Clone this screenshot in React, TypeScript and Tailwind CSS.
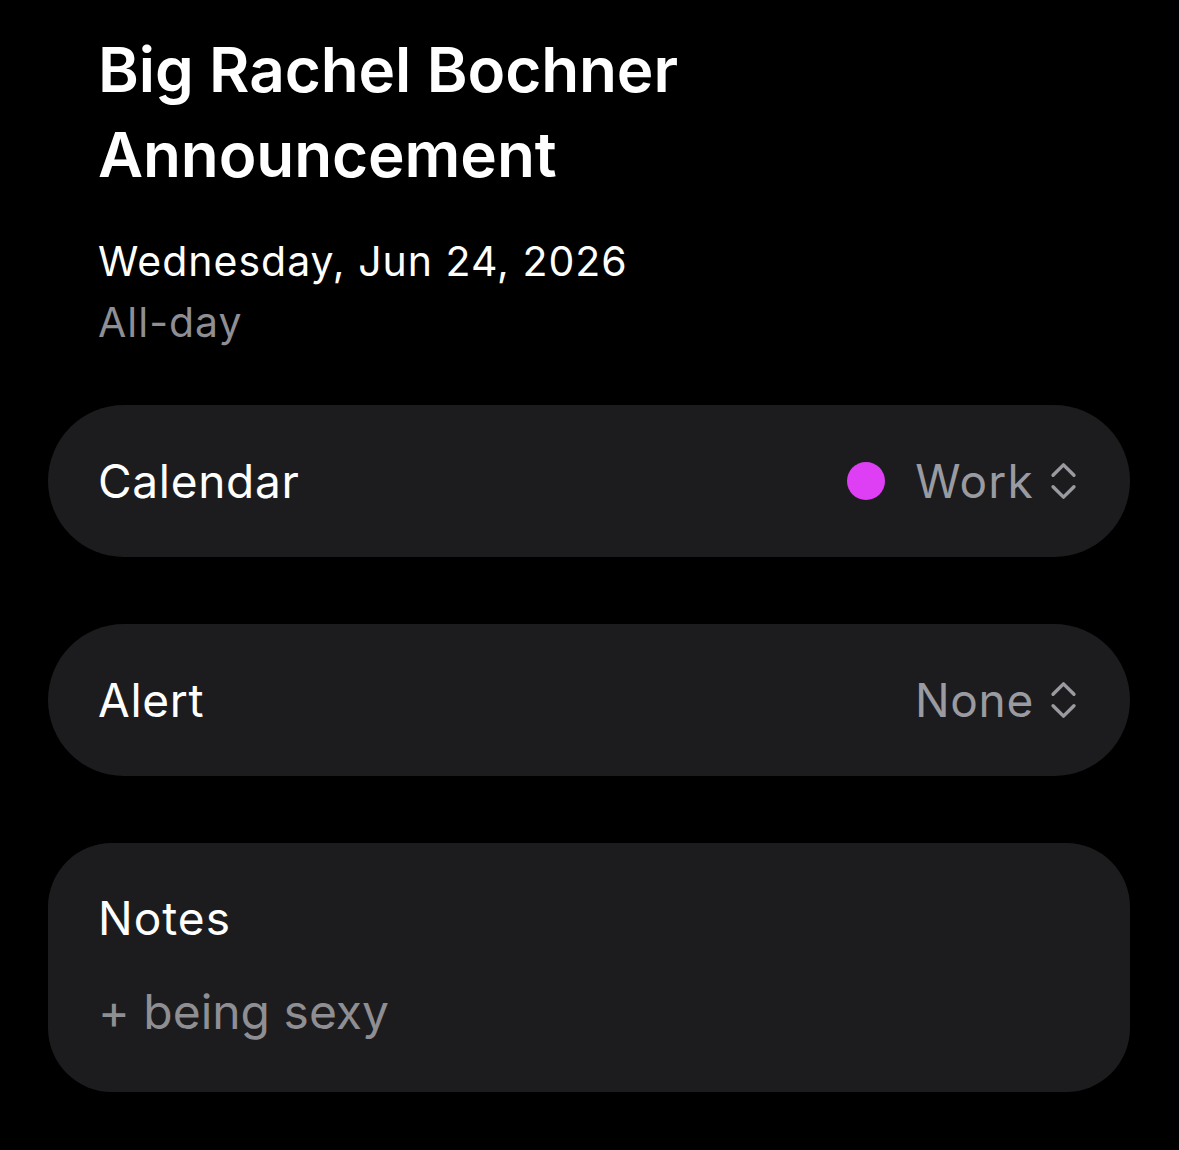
import type { ReactNode } from "react";

const font = { fontFamily: 'Inter, "Noto Sans", "Liberation Sans", sans-serif' };

function UpDownChevron() {
  return (
    <svg
      viewBox="0 0 28 40"
      className="h-[38px] w-[27px] shrink-0"
      fill="none"
      stroke="#9a9aa1"
      strokeWidth={3.6}
      strokeLinecap="round"
      strokeLinejoin="round"
    >
      <path d="M3 14 L14 3 L25 14" />
      <path d="M3 26 L14 37 L25 26" />
    </svg>
  );
}

function PickerRow({ label, children }: { label: string; children: ReactNode }) {
  return (
    <div className="flex h-[152px] items-center justify-between rounded-full bg-[#1c1c1e] pl-[50px] pr-[53px]">
      <span className="text-[46px] tracking-[0.7px] text-white">{label}</span>
      <div className="flex items-center gap-[16px]">{children}</div>
    </div>
  );
}

export default function App() {
  return (
    <div className="min-h-[1150px] w-full bg-black" style={font}>
      <header className="pl-[98px] pr-10 pt-[27px]">
        <h1 className="text-[62px] font-semibold leading-[85px] tracking-[-0.1px] text-white">
          Big Rachel Bochner
          <br />
          Announcement
        </h1>
        <p className="mt-[34px] text-[41px] leading-[61px] tracking-[1px] text-white">
          Wednesday, Jun 24, 2026
        </p>
        <p className="text-[41px] leading-[61px] tracking-[1px] text-[#8e8e93]">All-day</p>
      </header>

      <div className="mt-[52px] flex flex-col gap-[67px] pl-[48px] pr-[49px]">
        <PickerRow label="Calendar">
          <span className="mr-[14px] h-[38px] w-[38px] rounded-full bg-[#df3ff4]" />
          <span className="text-[46px] tracking-[1.2px] text-[#9a9aa1]">Work</span>
          <UpDownChevron />
        </PickerRow>

        <PickerRow label="Alert">
          <span className="text-[46px] tracking-[0.7px] text-[#9a9aa1]">None</span>
          <UpDownChevron />
        </PickerRow>

        <div className="flex h-[249px] flex-col rounded-[64px] bg-[#1c1c1e] pl-[50px] pr-[53px] pt-[47px]">
          <span className="text-[46px] leading-[56px] tracking-[1px] text-white">Notes</span>
          <span className="mt-[38px] text-[48px] leading-[56px] tracking-[0px] text-[#8e8e93]">
            + being sexy
          </span>
        </div>
      </div>
    </div>
  );
}
